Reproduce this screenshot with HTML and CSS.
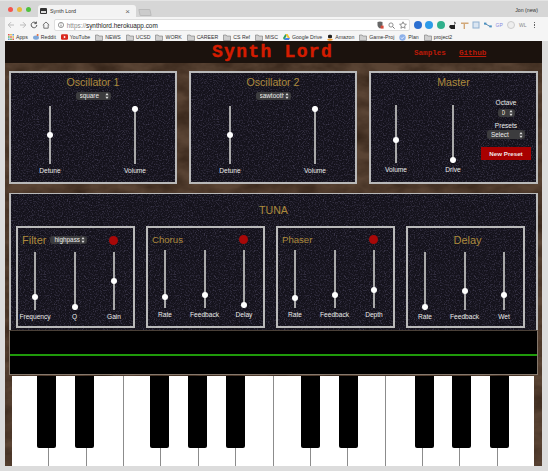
FILE: index.html
```html
<!DOCTYPE html>
<html lang="en">
<head>
    <meta charset="UTF-8">
    <meta name="viewport" content="width=device-width, initial-scale=1.0">
    <title>Synth Lord</title>
    <link rel="stylesheet" href="styles.css">
</head>
<body>
    <svg class="defs" width="0" height="0">
        <symbol id="folder" viewBox="0 0 8 7"><path d="M.5 1h2.6l.7 1h3.7v4.5H.5z" fill="#cfcfcf" stroke="#777" stroke-width=".6"/></symbol>
    </svg>

    <div class="tabstrip">
        <div class="lights"><i class="red"></i><i class="amber"></i><i class="green"></i></div>
        <div class="tab">
            <svg width="7" height="6" viewBox="0 0 7 6"><rect width="7" height="6" rx="1" fill="#333"/><rect x="1" y="3" width="5" height="2" fill="#ddd"/></svg>
            <span class="tab-title">Synth Lord</span>
            <span class="tab-close">×</span>
        </div>
        <div class="newtab"></div>
        <span class="profile">Jon (new)</span>
    </div>

    <div class="toolbar">
        <svg class="nav-icon" width="8" height="8" viewBox="0 0 8 8"><path d="M7 4H1.5M4 1.2 1.2 4 4 6.8" fill="none" stroke="#bbb"/></svg>
        <svg class="nav-icon" width="8" height="8" viewBox="0 0 8 8"><path d="M1 4h5.5M4 1.2 6.8 4 4 6.8" fill="none" stroke="#bbb"/></svg>
        <svg class="nav-icon" width="8" height="8" viewBox="0 0 8 8"><path d="M6.8 4A2.8 2.8 0 1 1 6 2M6.4.6v2H4.4" fill="none" stroke="#555"/></svg>
        <svg class="nav-icon" width="8" height="8" viewBox="0 0 8 8"><path d="M.8 4 4 1l3.2 3M1.8 3.6v3.6h4.4V3.6" fill="none" stroke="#555" stroke-width=".8"/></svg>
        <div class="urlbox">
            <svg width="6" height="6" viewBox="0 0 6 6"><circle cx="3" cy="3" r="2.6" fill="none" stroke="#555" stroke-width=".6"/><path d="M3 2.6v2M3 1.4v.6" stroke="#555" stroke-width=".7"/></svg>
            <span class="url"><span class="scheme">https://</span>synthlord.herokuapp.com</span>
            <span class="url-icons">
                <svg width="7" height="8" viewBox="0 0 7 8"><path d="M.5 1 3 .4 5.5 1v3C5.5 6 4 7 3 7.5 2 7 .5 6 .5 4z" fill="#666"/><rect x="3.6" y="4.6" width="3" height="3" fill="#d64a3a"/></svg>
                <svg width="7" height="7" viewBox="0 0 7 7"><circle cx="3" cy="3" r="2.1" fill="none" stroke="#777" stroke-width=".8"/><path d="m4.6 4.6 2 2" stroke="#777"/></svg>
                <svg width="8" height="8" viewBox="0 0 8 8"><path d="m4 .8 1 2.2 2.4.3-1.8 1.6.5 2.4L4 6.1 1.9 7.3l.5-2.4L.6 3.3 3 3z" fill="none" stroke="#666" stroke-width=".7"/></svg>
            </span>
        </div>
        <div class="extensions">
            <i class="ext ext-blue"></i>
            <i class="ext ext-sky"></i>
            <i class="ext ext-teal"></i>
            <svg width="8" height="8" viewBox="0 0 8 8"><path d="M5 .5 7 2 5 4H1L0 6l2 2h4V4z" fill="#222"/></svg>
            <svg width="8" height="8" viewBox="0 0 8 8"><path d="M0 1.5h7.5V3H4v5H2.6V3H0z" fill="#d2a878"/></svg>
            <svg width="8" height="8" viewBox="0 0 8 8"><rect x="1" y="1" width="6" height="6" fill="#dbe6f2" stroke="#8fb0d0"/></svg>
            <svg width="8" height="8" viewBox="0 0 8 8"><path d="m1 2.5 5 3" stroke="#5a8ab0"/><rect x="0" y="1.6" width="2.4" height="2" fill="#4a90c0"/><rect x="5.4" y="4.4" width="2.4" height="2" fill="#4a90c0"/></svg>
            <span class="ext-text ext-violet">GP</span>
            <i class="ext ext-grey"></i>
            <span class="ext-text">WL</span>
            <span class="menu-dots"><i></i><i></i><i></i></span>
        </div>
    </div>

    <div class="bookmarks">
        <a class="bm">
            <svg width="6" height="6" viewBox="0 0 6 6"><path d="M0 0h1.6v1.6H0z" fill="#e0574c"/><path d="M2.2 0h1.6v1.6H2.2z" fill="#e0b93c"/><path d="M4.4 0H6v1.6H4.4z" fill="#5b9bd5"/><path d="M0 2.2h1.6v1.6H0z" fill="#5fb05a"/><path d="M2.2 2.2h1.6v1.6H2.2z" fill="#e0574c"/><path d="M4.4 2.2H6v1.6H4.4z" fill="#e0b93c"/><path d="M0 4.4h1.6V6H0z" fill="#5b9bd5"/><path d="M2.2 4.4h1.6V6H2.2z" fill="#5fb05a"/><path d="M4.4 4.4H6V6H4.4z" fill="#e0574c"/></svg>
            Apps</a>
        <a class="bm">
            <svg width="6" height="6" viewBox="0 0 6 6"><ellipse cx="3" cy="3.6" rx="3" ry="2.2" fill="#7fa7d8"/><circle cx="4.6" cy="1" r="1" fill="#e06a3a"/></svg>
            Reddit</a>
        <a class="bm">
            <svg width="7" height="6" viewBox="0 0 7 6"><rect width="7" height="5.4" y=".3" rx="1.2" fill="#d9261c"/><path d="m2.8 1.6 2 1.4-2 1.4z" fill="#fff"/></svg>
            YouTube</a>
        <a class="bm"><svg width="8" height="7"><use href="#folder"/></svg>NEWS</a>
        <a class="bm"><svg width="8" height="7"><use href="#folder"/></svg>UCSD</a>
        <a class="bm"><svg width="8" height="7"><use href="#folder"/></svg>WORK</a>
        <a class="bm"><svg width="8" height="7"><use href="#folder"/></svg>CAREER</a>
        <a class="bm"><svg width="8" height="7"><use href="#folder"/></svg>CS Ref</a>
        <a class="bm"><svg width="8" height="7"><use href="#folder"/></svg>MISC</a>
        <a class="bm">
            <svg width="7" height="6" viewBox="0 0 7 6"><path d="M2.4 0h2.2L7 4H4.8z" fill="#f4c430"/><path d="M2.4 0 0 4l1.1 2 2.4-4z" fill="#2f9e5b"/><path d="M1.1 6h4.8L7 4H2.3z" fill="#4a86e8"/></svg>
            Google Drive</a>
        <a class="bm">
            <svg width="6" height="7" viewBox="0 0 6 7"><path d="M1 3.6V1.8C1 .4 5 .4 5 1.8v1.8C5 4.6 1 4.6 1 3.6z" fill="#222"/><path d="M0 6c2 1 4 1 6 0L5 4.8H1z" fill="#f0a030"/></svg>
            Amazon</a>
        <a class="bm"><svg width="8" height="7"><use href="#folder"/></svg>Game-Proj</a>
        <a class="bm">
            <svg width="7" height="7" viewBox="0 0 7 7"><circle cx="3.5" cy="3.5" r="3.2" fill="#8cb0ea"/><path d="m2 3.6 1.1 1.1L5 2.6" fill="none" stroke="#fff" stroke-width=".8"/></svg>
            Plan</a>
        <a class="bm"><svg width="8" height="7"><use href="#folder"/></svg>project2</a>
    </div>

    <div class="app">
        <header class="header">
            <h1 class="logo">Synth Lord</h1>
            <nav class="nav">
                <a>Samples</a>
                <a class="current">Github</a>
            </nav>
        </header>

        <section class="top-row">
            <div class="panel osc">
                <h2 class="panel-title">Oscillator 1</h2>
                <select class="picker wave"><option>square</option></select>
                <div class="sliders">
                    <label class="fader"><input type="range" value="50"><span>Detune</span></label>
                    <label class="fader"><input type="range" value="100"><span>Volume</span></label>
                </div>
            </div>
            <div class="panel osc">
                <h2 class="panel-title">Oscillator 2</h2>
                <select class="picker wave"><option>sawtooth</option></select>
                <div class="sliders">
                    <label class="fader"><input type="range" value="50"><span>Detune</span></label>
                    <label class="fader"><input type="range" value="100"><span>Volume</span></label>
                </div>
            </div>
            <div class="panel master">
                <h2 class="panel-title">Master</h2>
                <div class="master-body">
                    <div class="sliders master-sliders">
                        <label class="fader"><input type="range" value="38"><span>Volume</span></label>
                        <label class="fader"><input type="range" value="0"><span>Drive</span></label>
                    </div>
                    <div class="master-side">
                        <span class="side-label">Octave</span>
                        <select class="picker octave"><option>0</option></select>
                        <span class="side-label presets-label">Presets</span>
                        <select class="picker presets"><option>Select</option></select>
                        <button class="new-preset">New Preset</button>
                    </div>
                </div>
            </div>
        </section>

        <section class="tuna">
            <h2 class="panel-title tuna-title">TUNA</h2>
            <div class="effects">
                <div class="effect filter">
                    <div class="effect-head">
                        <h3 class="effect-title big">Filter</h3>
                        <select class="picker mode"><option>highpass</option></select>
                        <i class="led"></i>
                    </div>
                    <div class="sliders">
                        <label class="fader"><input type="range" value="19"><span>Frequency</span></label>
                        <label class="fader"><input type="range" value="0"><span>Q</span></label>
                        <label class="fader"><input type="range" value="50"><span>Gain</span></label>
                    </div>
                </div>
                <div class="effect">
                    <div class="effect-head small-head">
                        <h3 class="effect-title">Chorus</h3>
                        <i class="led"></i>
                    </div>
                    <div class="sliders">
                        <label class="fader"><input type="range" value="16"><span>Rate</span></label>
                        <label class="fader"><input type="range" value="20"><span>Feedback</span></label>
                        <label class="fader"><input type="range" value="0"><span>Delay</span></label>
                    </div>
                </div>
                <div class="effect">
                    <div class="effect-head small-head">
                        <h3 class="effect-title">Phaser</h3>
                        <i class="led"></i>
                    </div>
                    <div class="sliders">
                        <label class="fader"><input type="range" value="13"><span>Rate</span></label>
                        <label class="fader"><input type="range" value="20"><span>Feedback</span></label>
                        <label class="fader"><input type="range" value="28"><span>Depth</span></label>
                    </div>
                </div>
                <div class="effect">
                    <div class="effect-head centered">
                        <h3 class="effect-title big">Delay</h3>
                    </div>
                    <div class="sliders">
                        <label class="fader"><input type="range" value="0"><span>Rate</span></label>
                        <label class="fader"><input type="range" value="31"><span>Feedback</span></label>
                        <label class="fader"><input type="range" value="23"><span>Wet</span></label>
                    </div>
                </div>
            </div>
        </section>

        <div class="scope"><div class="trace"></div></div>

        <div class="keyboard">
            <div class="white"></div><div class="white"></div><div class="white"></div><div class="white"></div>
            <div class="white"></div><div class="white"></div><div class="white"></div><div class="white"></div>
            <div class="white"></div><div class="white"></div><div class="white"></div><div class="white"></div>
            <div class="white"></div><div class="white"></div>
            <div class="blacks">
                <div class="slot"><i></i></div>
                <div class="slot"><i></i></div>
                <div class="slot"></div>
                <div class="slot"><i></i></div>
                <div class="slot"><i></i></div>
                <div class="slot"><i></i></div>
                <div class="slot"></div>
                <div class="slot"><i></i></div>
                <div class="slot"><i></i></div>
                <div class="slot"></div>
                <div class="slot"><i></i></div>
                <div class="slot"><i></i></div>
                <div class="slot"><i></i></div>
            </div>
        </div>
    </div>
</body>
</html>
```

FILE: styles.css
```css
* {
    box-sizing: border-box;
}

html, body {
    height: 471px;
    overflow: hidden;
}

body {
    margin: 0;
    background-color: #dcdcdc;
    font-family: "Liberation Sans", Arial, sans-serif;
    color: #333;
}

.defs {
    position: absolute;
}

/* browser chrome */
.tabstrip {
    height: 17px;
    display: flex;
    align-items: flex-end;
    background-color: #d6d6d6;
    border-top: 1px solid #e4e4e4;
}

.lights {
    width: 38px;
    height: 15px;
    padding: 5px 0 0 8px;
    display: flex;
    gap: 4px;
}

.lights i {
    width: 5px;
    height: 5px;
    border-radius: 50%;
}

.red { background-color: #f4564e; }
.amber { background-color: #e8b93a; }
.green { background-color: #4fc13e; }

.tab {
    width: 98px;
    height: 12px;
    padding: 0 6px 0 2px;
    display: flex;
    align-items: center;
    gap: 3px;
    background-color: #f3f3f3;
    border-radius: 3px 3px 0 0;
    font-size: 5.4px;
}

.tab-title {
    flex: 1;
}

.tab-close {
    font-size: 8px;
    color: #666;
}

.newtab {
    width: 12px;
    height: 7px;
    margin: 0 0 1px 3px;
    background-color: #cbcbcb;
    border: 1px solid #bbb;
    border-radius: 1px;
    transform: skewX(12deg);
}

.profile {
    margin: 0 10px 4px auto;
    font-size: 5.2px;
    align-self: flex-end;
}

.toolbar {
    height: 16px;
    margin-left: 5px;
    padding-left: 1px;
    display: flex;
    align-items: center;
    background-color: #f5f5f5;
}

.nav-icon {
    margin-left: 3.6px;
    flex: none;
}

.nav-icon:first-child {
    margin-left: 1px;
}

.urlbox {
    width: 356px;
    height: 12px;
    margin-left: 4px;
    padding: 0 2px 0 3px;
    display: flex;
    align-items: center;
    gap: 3px;
    background-color: #fff;
    border: 1px solid #dedede;
    border-radius: 2px;
}

.url {
    font-size: 6.4px;
    color: #222;
}

.scheme {
    color: #8a8a8a;
}

.url-icons {
    margin-left: auto;
    display: flex;
    align-items: center;
    gap: 4px;
}

.extensions {
    margin-left: 4px;
    display: flex;
    align-items: center;
    gap: 3.7px;
}

.ext {
    width: 8px;
    height: 8px;
    border-radius: 50%;
}

.ext-blue { background-color: #2b6fd0; }
.ext-sky { background-color: #2d9be8; }
.ext-teal { background-color: #30b08c; }
.ext-grey { background-color: #eee; border: 1px solid #ccc; }

.ext-text {
    width: 8px;
    font-size: 5px;
    color: #888;
    white-space: nowrap;
}

.ext-violet {
    color: #8a8ae0;
}

.menu-dots {
    width: 8px;
    display: flex;
    flex-direction: column;
    align-items: center;
    gap: 1px;
}

.menu-dots i {
    width: 1.4px;
    height: 1.4px;
    background-color: #666;
}

.bookmarks {
    height: 8px;
    margin-left: 5px;
    padding-left: 3px;
    display: flex;
    align-items: center;
    gap: 5px;
    background-color: #f5f5f5;
    overflow: hidden;
    white-space: nowrap;
}

.bm {
    display: flex;
    align-items: center;
    gap: 2px;
    font-size: 5.2px;
    color: #333;
}

/* the app */
.app {
    width: 537px;
    height: 425px;
    margin-left: 5px;
    background-color: #5a4434;
    background-image: url("data:image/svg+xml,%3Csvg xmlns='http://www.w3.org/2000/svg' width='537' height='425'%3E%3Cfilter id='w' color-interpolation-filters='sRGB'%3E%3CfeTurbulence type='fractalNoise' baseFrequency='.035 .06' numOctaves='4' seed='4'/%3E%3CfeColorMatrix values='0 0 0 0 .16 0 0 0 0 .1 0 0 0 0 .06 1.2 0 0 0 -.35'/%3E%3C/filter%3E%3Crect width='537' height='425' filter='url(%23w)'/%3E%3C/svg%3E");
}

.header {
    height: 22px;
    padding-left: 207px;
    display: flex;
    align-items: center;
    background-color: #1b120d;
}

.logo {
    margin: 0;
    width: 121px;
    font-family: "Liberation Mono", monospace;
    font-size: 18px;
    font-weight: bold;
    letter-spacing: 1.3px;
    line-height: 22px;
    color: #d41c00;
    -webkit-text-stroke: .4px #d41c00;
    white-space: nowrap;
}

.nav {
    margin: 1px 0 0 81px;
    display: flex;
    gap: 13px;
    font-family: "Liberation Mono", monospace;
    font-size: 7.6px;
    font-weight: bold;
    color: #bd1a08;
}

.current {
    text-decoration: underline;
}

.top-row {
    margin: 8px 0 0 4px;
    display: flex;
    gap: 12px;
}

.panel, .tuna, .effect {
    border: 2px solid #b9b9b9;
    background-color: #14121b;
    background-image: url("data:image/svg+xml,%3Csvg xmlns='http://www.w3.org/2000/svg' width='256' height='256'%3E%3Cfilter id='n' color-interpolation-filters='sRGB'%3E%3CfeTurbulence type='fractalNoise' baseFrequency='.8' numOctaves='2' seed='7'/%3E%3CfeColorMatrix values='0 0 0 0 .3 0 0 0 0 .28 0 0 0 0 .38 2 0 0 0 -.95'/%3E%3C/filter%3E%3Crect width='256' height='256' filter='url(%23n)'/%3E%3C/svg%3E");
}

.panel {
    width: 168px;
    height: 113px;
    display: flex;
    flex-direction: column;
    align-items: center;
}

.master {
    width: 169px;
}

.panel-title {
    margin: 0;
    font-size: 10.6px;
    font-weight: normal;
    line-height: 14px;
    color: #ad8a3c;
}

.osc .panel-title, .master .panel-title {
    margin-top: 2px;
}

.picker {
    appearance: none;
    height: 8px;
    padding: 0 7px 0 4px;
    background-color: #3c3c3e;
    background-image: url("data:image/svg+xml,%3Csvg xmlns='http://www.w3.org/2000/svg' width='4' height='6'%3E%3Cpath d='M2 0 3.6 2.2H.4zM2 6 3.6 3.8H.4z' fill='%23ddd'/%3E%3C/svg%3E");
    background-repeat: no-repeat;
    background-position: right 2px center;
    border: 0;
    border-radius: 3px;
    font-family: "Liberation Sans", Arial, sans-serif;
    font-size: 6.4px;
    line-height: 8px;
    color: #ececec;
}

.wave {
    width: 35px;
    margin-top: 3px;
}

.sliders {
    display: flex;
    align-self: flex-start;
    padding-left: 1px;
    gap: 9.5px;
}

.osc .sliders {
    margin-top: 6px;
    padding-left: 24px;
    gap: 55px;
}

.fader {
    width: 30px;
    display: flex;
    flex-direction: column;
    align-items: center;
    font-size: 6.6px;
    color: #ececec;
}

.fader span {
    margin-top: 3px;
    line-height: 8px;
    white-space: nowrap;
}

input[type="range"] {
    appearance: none;
    writing-mode: vertical-lr;
    direction: rtl;
    width: 7px;
    height: 58px;
    margin: 0;
    padding: 0;
    background: transparent;
}

input[type="range"]::-webkit-slider-runnable-track {
    width: 2px;
    margin: 0 auto;
    background-color: #a9a9a9;
}

input[type="range"]::-webkit-slider-thumb {
    appearance: none;
    width: 6px;
    height: 6px;
    margin-left: -2px;
    border-radius: 50%;
    background-color: #fff;
}

.master-body {
    width: 100%;
    display: flex;
}

.master-sliders {
    margin-top: 16px;
    padding-left: 10px;
    gap: 27px;
}

.master-side {
    width: 56px;
    margin: 0 2px 0 auto;
    padding-top: 10px;
    display: flex;
    flex-direction: column;
    align-items: center;
}

.side-label {
    font-size: 6.6px;
    line-height: 8px;
    color: #ececec;
}

.octave {
    width: 17px;
    margin-top: 2px;
    height: 8px;
}

.presets-label {
    margin-top: 5px;
}

.presets {
    width: 38px;
    height: 9px;
}

.new-preset {
    width: 50px;
    height: 13px;
    margin-top: 8px;
    padding: 0;
    background-color: #a80000;
    border: 0;
    font-family: "Liberation Sans", Arial, sans-serif;
    font-size: 6.2px;
    font-weight: bold;
    color: #f0e6e6;
}

.tuna {
    margin: 9px 0 0 4px;
    width: 529px;
    height: 137px;
    padding: 9px 0 0 5px;
    border-width: 1px 2px 0;
    text-align: center;
}

.tuna-title {
    line-height: 14px;
    margin-right: 5px;
}

.effects {
    margin-top: 9px;
    display: flex;
    gap: 11px;
}

.effect {
    width: 119px;
    height: 102px;
    padding: 0 0 0 1px;
    display: flex;
    flex-direction: column;
}

.effect-head {
    height: 24px;
    padding-left: 3px;
    display: flex;
    align-items: center;
    gap: 4px;
}

.effect-title {
    margin: 0;
    font-size: 9.6px;
    font-weight: normal;
    color: #ad8a3c;
}

.effect-title.big {
    font-size: 11px;
}

.mode {
    width: 37px;
}

.led {
    width: 9px;
    height: 9px;
    margin: 0 15.5px 0 auto;
    border-radius: 50%;
    background-color: #a80808;
}

.small-head {
    height: 22px;
}

.centered {
    justify-content: center;
}

/* scope and keys */
.scope {
    width: 529px;
    height: 45px;
    margin-left: 4px;
    display: flex;
    flex-direction: column;
    justify-content: center;
    background-color: #000;
    border: 1px solid #85786c;
    border-top-color: #4a4038;
}

.trace {
    height: 2px;
    margin-top: 5px;
    background-color: #1f9a0a;
}

.keyboard {
    position: relative;
    width: 522px;
    height: 90px;
    margin: 1px 0 0 7px;
    display: flex;
}

.white {
    flex: 1;
    background-color: #fff;
    border-right: 1px solid #8c8c8c;
}

.white:nth-child(14) {
    border-right: 0;
}

.blacks {
    position: absolute;
    top: 0;
    left: 25px;
    display: flex;
}

.slot {
    width: 37.75px;
}

.slot i {
    display: block;
    width: 19px;
    height: 72px;
    background-color: #000;
    border-radius: 0 0 2px 2px;
}
```
